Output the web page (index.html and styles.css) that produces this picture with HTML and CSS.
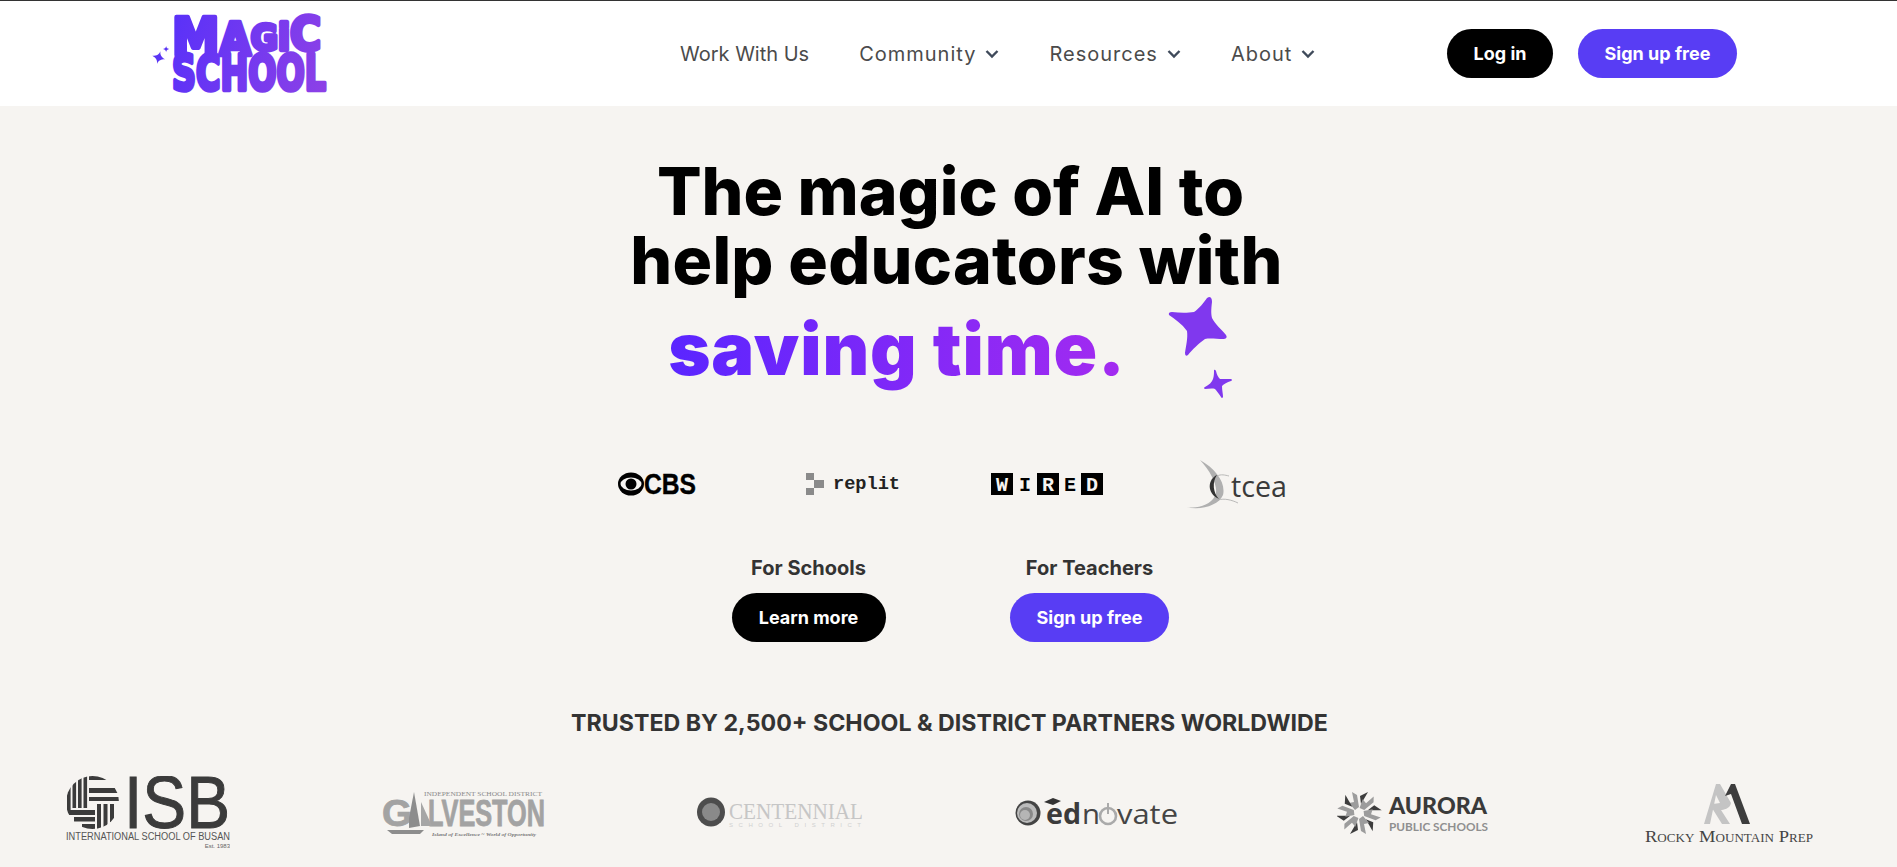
FILE: index.html
```html
<!DOCTYPE html>
<html lang="en">
<head>
<meta charset="utf-8">
<title>MagicSchool</title>
<link rel="stylesheet" href="styles.css">
</head>
<body>
<svg class="defs" width="0" height="0" aria-hidden="true">
  <defs>
    <linearGradient id="logoGrad" gradientUnits="userSpaceOnUse" x1="0" y1="20" x2="180" y2="70">
      <stop offset="0" stop-color="#5530fa"/><stop offset="1" stop-color="#8e41e6"/>
    </linearGradient>
    <path id="sparkle" d="M12 0 C12.8 6 15.5 9.6 24 12 C15.5 14.4 12.8 18 12 24 C11.2 18 8.5 14.4 0 12 C8.5 9.6 11.2 6 12 0Z"/>
    <g id="aurArm">
      <path d="M15 1 L20 4 L22 16 L18 19 L12 12 L17 11Z" fill="#9c9c9c"/>
      <path d="M23 5 L31 1 L24 13Z" fill="#3d3d3d"/>
    </g>
  </defs>
</svg>
<header class="site-header">
  <a class="logo" href="#" aria-label="MagicSchool">
    <svg width="176" height="82" viewBox="0 0 176 82">
      <use href="#sparkle" transform="translate(0 38) rotate(15 7 7) scale(.55)" fill="#5a35f5"/>
      <use href="#sparkle" transform="translate(11 33) scale(.26)" fill="#5a35f5"/>
      <text class="logo-text" x="20" y="42" textLength="149" lengthAdjust="spacingAndGlyphs"><tspan font-size="52">M</tspan><tspan font-size="44">A</tspan><tspan font-size="36" dy="-5">G</tspan><tspan font-size="38">i</tspan><tspan font-size="46">C</tspan></text>
      <text class="logo-text" x="20" y="77" textLength="154" lengthAdjust="spacingAndGlyphs">SCHOOL</text>
    </svg>
  </a>
  <nav class="main-nav">
    <a href="#">Work With Us</a>
    <a class="has-menu" href="#">Community <svg class="chev" viewBox="0 0 14 10"><path d="M1.5 2 7 7.5 12.5 2"/></svg></a>
    <a class="has-menu" href="#">Resources <svg class="chev" viewBox="0 0 14 10"><path d="M1.5 2 7 7.5 12.5 2"/></svg></a>
    <a class="has-menu" href="#">About <svg class="chev" viewBox="0 0 14 10"><path d="M1.5 2 7 7.5 12.5 2"/></svg></a>
  </nav>
  <div class="header-actions">
    <a class="btn btn-black btn-login" href="#">Log in</a>
    <a class="btn btn-purple btn-signup" href="#">Sign up free</a>
  </div>
</header>
<main class="hero">
  <h1 class="headline">
    <span class="line line-one">The magic of AI to</span>
    <span class="line line-two">help educators with</span>
    <span class="line line-three">
      <span class="grad">saving time.</span>
      <svg class="stars" width="70" height="108" viewBox="0 0 70 108">
        <path fill="#8038ee" d="M43 3 Q46 3 46 8 C45 16 45 20 46 24 C49 30 56 36 60 41 Q62 44 58 45 C50 45 44 44 39 45 C33 49 26 56 22 61 Q19 63 19 59 C20 52 22 44 21 37 C16 30 9 25 3 21 Q2 18 6 18 C14 19 22 19 28 18 C33 15 38 8 41 4Z"/>
        <path fill="#8038ee" d="M48 76 Q49 75 50 77 C51 81 52 83 54 85 C58 85 62 85 65 85 Q67 86 65 87 C61 88 58 90 56 92 C56 96 57 100 57 103 Q56 105 55 103 C53 100 51 97 49 95 C46 94 42 95 39 95 Q37 94 39 93 C43 91 46 88 47 85 C48 82 48 79 48 76Z"/>
      </svg>
    </span>
  </h1>
  <section class="press">
    <div class="press-item">
      <svg width="80" height="28" viewBox="0 0 80 28">
        <ellipse cx="13" cy="14" rx="13" ry="11.5" fill="#000"/>
        <ellipse cx="13" cy="14" rx="10.5" ry="6.5" fill="#f6f4f1"/>
        <circle cx="13" cy="14" r="5.5" fill="#000"/>
        <text class="t-cbs" x="26" y="24" textLength="52" lengthAdjust="spacingAndGlyphs">CBS</text>
      </svg>
    </div>
    <div class="press-item">
      <svg width="96" height="26" viewBox="0 0 96 26">
        <g fill="#8a8a8a"><rect x="1" y="2" width="8" height="7"/><rect x="9" y="9" width="10" height="8"/><rect x="1" y="17" width="8" height="7"/></g>
        <text class="t-replit" x="28" y="18" textLength="67" lengthAdjust="spacingAndGlyphs">replit</text>
      </svg>
    </div>
    <div class="press-item">
      <svg width="114" height="26" viewBox="0 0 114 26">
        <rect x="0" y="2" width="22" height="22" fill="#000"/>
        <rect x="46" y="2" width="22" height="22" fill="#000"/>
        <rect x="90" y="2" width="22" height="22" fill="#000"/>
        <text class="t-wired inv" x="11" y="20" text-anchor="middle">W</text>
        <text class="t-wired" x="34" y="20" text-anchor="middle">I</text>
        <text class="t-wired inv" x="57" y="20" text-anchor="middle">R</text>
        <text class="t-wired" x="79" y="20" text-anchor="middle">E</text>
        <text class="t-wired inv" x="101" y="20" text-anchor="middle">D</text>
      </svg>
    </div>
    <div class="press-item press-tcea">
      <svg width="102" height="58" viewBox="0 0 102 58">
        <path d="M14 5 C30 14 40 28 37 40 C33 50 15 56 0 52 C12 54 24 50 29 41 C33 33 26 18 14 5Z" fill="#b0b0b0"/>
        <path d="M31 20 C22 24 20 38 33 44 C27 38 26 27 31 20Z" fill="#333"/>
        <path d="M31 21 C35 19 39 20 43 21 M32 45 C38 43 46 45 52 48" stroke="#aaa" stroke-width=".8" fill="none"/>
        <text class="t-tcea" x="45" y="42" textLength="56" lengthAdjust="spacingAndGlyphs">tcea</text>
      </svg>
    </div>
  </section>
  <section class="cta-row">
    <div class="cta">
      <p class="cta-label">For Schools</p>
      <a class="btn btn-black btn-learn" href="#">Learn more</a>
    </div>
    <div class="cta">
      <p class="cta-label">For Teachers</p>
      <a class="btn btn-purple btn-signup" href="#">Sign up free</a>
    </div>
  </section>
  <h2 class="trusted">TRUSTED BY 2,500+ SCHOOL &amp; DISTRICT PARTNERS WORLDWIDE</h2>
  <section class="partners">
    <div class="partner">
      <svg width="164" height="74" viewBox="0 0 164 74">
        <defs><clipPath id="isbClip"><circle cx="26.5" cy="26.5" r="26.5"/></clipPath></defs>
        <g clip-path="url(#isbClip)" fill="#3b3b3b">
          <rect x="1" y="6" width="3.6" height="28"/><rect x="6.5" y="3" width="3.6" height="29"/><rect x="12" y="1" width="3.6" height="31"/><rect x="17.5" y="0" width="3.6" height="32"/>
          <rect x="23" y="0" width="18" height="4"/><rect x="23" y="12" width="32" height="5"/><rect x="23" y="21" width="32" height="4"/>
          <rect x="31" y="28" width="4" height="25"/><rect x="37.5" y="28" width="4" height="25"/><rect x="44" y="28" width="4" height="22"/>
          <rect x="0" y="34" width="29" height="5"/><rect x="8" y="41" width="21" height="4.5"/><rect x="16" y="48" width="13" height="5"/>
        </g>
        <text class="t-isb" x="58" y="52" textLength="106" lengthAdjust="spacingAndGlyphs">ISB</text>
        <text class="t-isb-sub" x="0" y="64" textLength="164" lengthAdjust="spacingAndGlyphs">INTERNATIONAL SCHOOL OF BUSAN</text>
        <text class="t-isb-est" x="164" y="72" text-anchor="end">Est. 1983</text>
      </svg>
    </div>
    <div class="partner">
      <svg width="164" height="50" viewBox="0 0 164 50">
        <text class="t-gal-top" x="42" y="8" textLength="118" lengthAdjust="spacingAndGlyphs">INDEPENDENT SCHOOL DISTRICT</text>
        <text class="t-gal" x="0" y="38" textLength="30" lengthAdjust="spacingAndGlyphs">G</text>
        <text class="t-gal" x="46" y="38" textLength="117" lengthAdjust="spacingAndGlyphs">LVESTON</text>
        <path d="M27 40 L27 30 L32 4 L38 38Z" fill="#8d8d8d"/>
        <path d="M39 14 L50 38 L39 38Z" fill="#a6a6a6"/>
        <path d="M5 42 H42 L38 46 H10Z" fill="#8d8d8d"/>
        <text class="t-gal-sub" x="50" y="48" textLength="104" lengthAdjust="spacingAndGlyphs">Island of Excellence ~ World of Opportunity</text>
      </svg>
    </div>
    <div class="partner">
      <svg width="166" height="32" viewBox="0 0 166 32">
        <ellipse cx="14" cy="15" rx="14" ry="14.5" fill="#4d4d4d"/>
        <circle cx="14" cy="15" r="9" fill="#8a8a8a"/>
        <text class="t-cent" x="32" y="22" textLength="134" lengthAdjust="spacingAndGlyphs">CENTENNIAL</text>
        <text class="t-cent-sub" x="32" y="30" textLength="132">SCHOOL DISTRICT</text>
      </svg>
    </div>
    <div class="partner">
      <svg width="164" height="32" viewBox="0 0 164 32">
        <circle cx="13" cy="16" r="12.5" fill="#444"/>
        <circle cx="12" cy="16" r="10" fill="#bbb"/>
        <circle cx="11" cy="17" r="7" fill="#888"/>
        <circle cx="10" cy="18" r="5" fill="#b5b5b5"/>
        <path d="M29 5 L38 1 L46 4 L38 8Z" fill="#333"/>
        <text class="t-ed-b" x="31" y="27" textLength="35" lengthAdjust="spacingAndGlyphs">ed</text>
        <text class="t-ed" x="67" y="27" textLength="18" lengthAdjust="spacingAndGlyphs">n</text>
        <circle cx="93" cy="19" r="8" fill="none" stroke="#aaa" stroke-width="2.6"/>
        <path d="M93 6 V17" stroke="#aaa" stroke-width="2"/>
        <text class="t-ed" x="102" y="27" textLength="61" lengthAdjust="spacingAndGlyphs">vate</text>
      </svg>
    </div>
    <div class="partner">
      <svg width="152" height="46" viewBox="0 0 152 46">
        <use href="#aurArm" transform="translate(0 1)"/>
        <use href="#aurArm" transform="translate(0 1) rotate(60 22 22)"/>
        <use href="#aurArm" transform="translate(0 1) rotate(120 22 22)"/>
        <use href="#aurArm" transform="translate(0 1) rotate(180 22 22)"/>
        <use href="#aurArm" transform="translate(0 1) rotate(240 22 22)"/>
        <use href="#aurArm" transform="translate(0 1) rotate(300 22 22)"/>
        <text class="t-aur" x="52" y="24" textLength="98" lengthAdjust="spacingAndGlyphs">AURORA</text>
        <text class="t-aur-sub" x="52" y="41" textLength="99" lengthAdjust="spacingAndGlyphs">PUBLIC SCHOOLS</text>
      </svg>
    </div>
    <div class="partner">
      <svg width="168" height="62" viewBox="0 0 168 62">
        <path d="M59 42 L71 2 H75 L86 21 C85 27 78 28 76 28 L85 42 H77 L67 26 L68 22 L75 21 L71 13 L65 42Z" fill="#c4c4c4"/>
        <path d="M86 2 H90 L105 42 H97 L86 12 L80 14Z" fill="#3d3d3d"/>
        <text class="t-rmp" x="0" y="60" textLength="168" lengthAdjust="spacingAndGlyphs">Rocky Mountain Prep</text>
      </svg>
    </div>
  </section>
</main>
</body>
</html>
```
FILE: styles.css
```css
* { box-sizing: border-box; }
html, body { margin: 0; padding: 0; }
body {
  height: 867px;
  overflow: hidden;
  background: #f6f4f1;
  font-family: "Inter", "Liberation Sans", sans-serif;
  color: #333;
}
a { text-decoration: none; color: inherit; }
.defs { position: absolute; }
svg { display: block; }

.site-header {
  height: 106px;
  background: #fff;
  border-top: 1px solid #333;
  display: flex;
  align-items: center;
  padding: 0 160px 0 152px;
}
.logo { width: 176px; }
.logo-text {
  font-family: "DejaVu Sans", sans-serif;
  font-weight: 700;
  font-size: 50px;
  fill: url(#logoGrad);
  stroke: url(#logoGrad);
  stroke-width: 4.5;
  stroke-linejoin: round;
}
.main-nav {
  flex: 1;
  margin-left: 352px;
  display: flex;
  align-items: center;
  gap: 50px;
  font-size: 20px;
  color: #4b4b4b;
}
.main-nav a { display: flex; align-items: center; gap: 9px; }
.main-nav .has-menu { letter-spacing: 1px; }
.chev { width: 14px; height: 10px; }
.chev path { fill: none; stroke: #3f4a5a; stroke-width: 2.4; }
.header-actions { display: flex; gap: 25px; }

.btn {
  display: flex;
  align-items: center;
  justify-content: center;
  height: 49px;
  border-radius: 25px;
  color: #fff;
  font-size: 18px;
  font-weight: 700;
}
.btn-black { background: #000; }
.btn-purple { background: #583df4; }
.btn-login { width: 106px; }
.btn-signup { width: 159px; }
.btn-learn { width: 154px; }

.hero { display: flex; flex-direction: column; align-items: center; }
.headline {
  margin: 51px 0 0;
  width: 100%;
  display: flex;
  flex-direction: column;
  align-items: center;
  font-size: 66px;
  font-weight: 800;
  color: #000;
  line-height: 69px;
  letter-spacing: 0.25px;
}
.line { display: block; }
.line-one { padding-left: 4px; letter-spacing: 0; }
.line-two { padding-left: 16px; }
.line-three {
  display: flex;
  align-items: flex-start;
  gap: 40px;
  height: 108px;
  margin-left: 7px;
}
.grad {
  margin-top: 9px;
  font-size: 72px;
  font-weight: 900;
  line-height: 90px;
  letter-spacing: 0.9px;
  background: linear-gradient(90deg, #5a25ff, #a42bf0);
  -webkit-background-clip: text;
  background-clip: text;
  color: transparent;
}
.stars { margin-top: -1px; }

.press {
  margin: 51px 0 0 4px;
  display: grid;
  grid-template-columns: repeat(4, 195px);
  height: 60px;
  align-items: center;
  justify-items: center;
}
.press-item { display: flex; justify-content: center; }
.press-tcea { margin-left: -12px; }
.t-cbs { font: 700 29px "Liberation Sans", sans-serif; fill: #000; stroke: #000; stroke-width: .4; }
.t-replit { font: 700 19px "Liberation Mono", monospace; fill: #222; }
.t-wired { font: 700 20px "Liberation Mono", monospace; fill: #000; }
.t-wired.inv { fill: #f6f4f1; }
.t-tcea { font: 500 30px "Open Sans", sans-serif; fill: #3a3a3a; }

.cta-row {
  margin: 41px 0 0 1px;
  display: grid;
  grid-template-columns: repeat(2, 281px);
  justify-items: center;
}
.cta { display: flex; flex-direction: column; align-items: center; gap: 12px; }
.cta-label { margin: 0; font-size: 20px; font-weight: 700; line-height: 26px; color: #333; }

.trusted {
  margin: 66px 0 0 2px;
  font-size: 23.2px;
  font-weight: 700;
  line-height: 30px;
  color: #333;
}

.partners {
  margin: 35px 0 0 -20px;
  width: 100%;
  display: grid;
  grid-template-columns: repeat(6, 1fr);
  height: 80px;
  align-items: center;
  justify-items: center;
}
.t-isb { font: 400 75px "Liberation Sans", sans-serif; fill: #3b3b3b; stroke: #3b3b3b; stroke-width: 1; }
.t-isb-sub { font: 400 10px "Liberation Sans", sans-serif; fill: #555; }
.t-isb-est { font: 400 6px "Liberation Sans", sans-serif; fill: #666; }
.t-gal-top { font: 400 7px "Liberation Serif", serif; fill: #8a8a8a; }
.t-gal { font: 700 36px "Liberation Sans Narrow", "Liberation Sans", sans-serif; fill: #a3a3a3; stroke: #a3a3a3; stroke-width: .8; }
.t-gal-sub { font: italic 700 5px "Liberation Serif", serif; fill: #777; }
.t-cent { font: 400 23px "Liberation Serif", serif; fill: #c6c6c6; }
.t-cent-sub { font: 400 6px "Liberation Sans", sans-serif; fill: #d0d0d0; }
.t-ed-b { font: 700 28px "Open Sans", sans-serif; fill: #3b3b3b; }
.t-ed { font: 400 28px "Open Sans", sans-serif; fill: #444; }
.t-aur { font: 900 22px "Lato", sans-serif; fill: #3a3a3a; }
.t-aur-sub { font: 700 12px "Lato", sans-serif; fill: #8f8f8f; }
.t-rmp { font: 400 17px "Liberation Serif", serif; fill: #444; font-variant: small-caps; }
```
